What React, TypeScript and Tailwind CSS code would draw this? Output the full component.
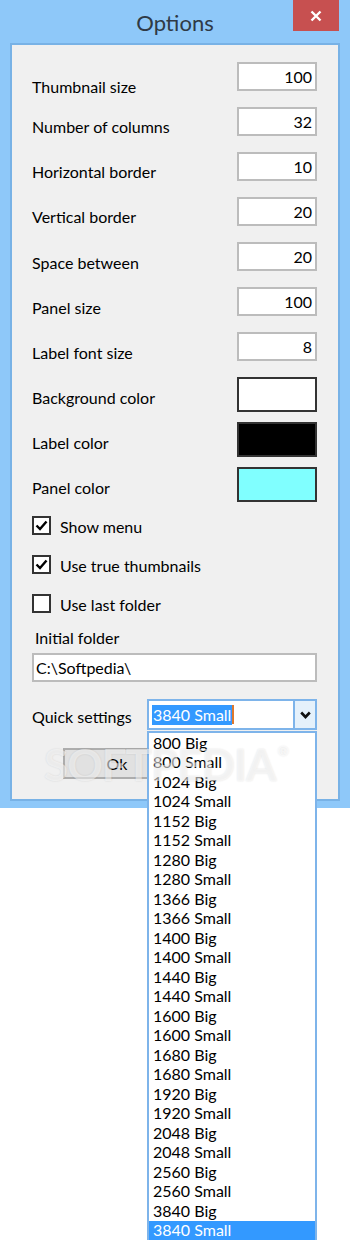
import type { ReactNode } from "react";

const FONT = { fontFamily: "Lato, 'Open Sans', sans-serif" };

const numberRows = [
  { label: "Thumbnail size", value: "100", lift: "mt-[15px]" },
  { label: "Number of columns", value: "32", lift: "mt-[10px]" },
  { label: "Horizontal border", value: "10", lift: "mt-[10px]" },
  { label: "Vertical border", value: "20", lift: "mt-[10px]" },
  { label: "Space between", value: "20", lift: "mt-[11px]" },
  { label: "Panel size", value: "100", lift: "mt-[11px]" },
  { label: "Label font size", value: "8", lift: "mt-[11px]" },
];

const colorRows = [
  { label: "Background color", color: "bg-white" },
  { label: "Label color", color: "bg-black" },
  { label: "Panel color", color: "bg-[#80ffff]" },
];

const checks = [
  { label: "Show menu", checked: true },
  { label: "Use true thumbnails", checked: true },
  { label: "Use last folder", checked: false },
];

const presets = [800, 1024, 1152, 1280, 1366, 1400, 1440, 1600, 1680, 1920, 2048, 2560, 3840].flatMap(
  (w) => [`${w} Big`, `${w} Small`],
);

function Row({ label, lift, children }: { label: string; lift: string; children: ReactNode }) {
  return (
    <div className="flex h-[45px] items-start justify-between">
      <span className={`${lift} text-[16px] leading-[20px] text-black`}>{label}</span>
      {children}
    </div>
  );
}

function CheckBox({ checked }: { checked: boolean }) {
  return (
    <span className="flex h-[19px] w-[19px] items-center justify-center border-2 border-[#333] bg-white">
      {checked && (
        <svg width="13" height="11" viewBox="0 0 13 11">
          <polyline points="1.5,5.5 5,9 11.5,1.5" fill="none" stroke="#000" strokeWidth="2.4" />
        </svg>
      )}
    </span>
  );
}

export default function App() {
  return (
    <div className="relative h-[1241px] w-[350px] overflow-hidden bg-white" style={FONT}>
      {/* Window frame */}
      <div className="flex flex-col bg-[#8ec8f9] px-[10px] pb-[7px]">
        <div className="relative flex h-[43px] items-center justify-center pt-[2px]">
          <span className="text-[22px] text-[#2f3a46]">Options</span>
          <div className="absolute right-[1px] top-0 flex h-[31px] w-[46px] items-center justify-center bg-[#c75050]">
            <svg width="12" height="12" viewBox="0 0 12 12">
              <path d="M1.5 1.5 L10.5 10.5 M10.5 1.5 L1.5 10.5" stroke="#fff" strokeWidth="2.4" />
            </svg>
          </div>
        </div>

        {/* Client area */}
        <div className="flex flex-col border-2 border-[#78b2e6] bg-[#f0f0f0] pb-[20px] pl-[20px] pr-[21px] pt-[17px]">
          {numberRows.map((r) => (
            <Row key={r.label} label={r.label} lift={r.lift}>
              <div className="flex h-[29px] w-[80px] items-center justify-end border-2 border-[#bcbcbc] bg-white pr-[3px] text-[16px] text-black">
                {r.value}
              </div>
            </Row>
          ))}
          {colorRows.map((r) => (
            <Row key={r.label} label={r.label} lift="mt-[11px]">
              <div className={`h-[35px] w-[80px] border-2 border-[#333] ${r.color}`} />
            </Row>
          ))}

          <div className="mt-[4px] flex flex-col gap-[20px]">
            {checks.map((c) => (
              <div key={c.label} className="flex h-[19px] items-center gap-[9px]">
                <CheckBox checked={c.checked} />
                <span className="mt-[2px] text-[16px] leading-[20px] text-black">{c.label}</span>
              </div>
            ))}
          </div>

          <span className="ml-[3px] mt-[15px] text-[16px] leading-[20px] text-black">Initial folder</span>
          <div className="mt-[5px] flex h-[29px] items-center border-2 border-[#bcbcbc] bg-white pl-[2px] text-[16px] text-black">
            C:\Softpedia\
          </div>

          <div className="mt-[17px] flex h-[31px] items-center">
            <span className="mt-[4px] w-[115px] text-[16px] leading-[20px] text-black">Quick settings</span>
            <div className="flex h-[31px] w-[170px] border-2 border-[#7eb4ea] bg-white">
              <div className="flex flex-1 items-center pl-[3px]">
                <span className="bg-[#3399ff] px-[1px] text-[16px] leading-[20px] text-white">3840 Small</span>
                <span className="h-[19px] w-[2px] bg-[#e0782c]" />
              </div>
              <div className="flex w-[22px] items-center justify-center border-l-2 border-[#7eb4ea] bg-[#e5f1fb]">
                <svg width="11" height="8" viewBox="0 0 11 8">
                  <polyline points="1.2,1.5 5.5,6 9.8,1.5" fill="none" stroke="#111" strokeWidth="2.6" />
                </svg>
              </div>
            </div>
          </div>

          <div className="ml-[31px] mt-[18px] flex h-[31px] w-[108px] items-center justify-center border-2 border-[#adadad] bg-[#e1e1e1] text-[16px] text-black">
            Ok
          </div>
        </div>
      </div>

      {/* Open drop-down list */}
      <div className="absolute left-[147px] top-[731px] w-[170px] border-x-2 border-t-2 border-[#7eb4ea] bg-white">
        {presets.map((p) => (
          <div
            key={p}
            className={`flex h-[19.5px] items-center pl-[4px] text-[16px] ${
              p === "3840 Small" ? "bg-[#3399ff] text-white" : "text-black"
            }`}
          >
            {p}
          </div>
        ))}
      </div>

      {/* Watermark */}
      <div className="pointer-events-none absolute left-[44px] top-[740px] flex items-start text-[44px] font-bold leading-[48px] tracking-[-1px] text-white/55 [text-shadow:0_0_2px_rgba(0,0,0,0.12)]">
        SOFTPEDIA
        <span className="ml-[2px] mt-[4px] text-[14px] leading-[14px]">®</span>
      </div>
    </div>
  );
}
